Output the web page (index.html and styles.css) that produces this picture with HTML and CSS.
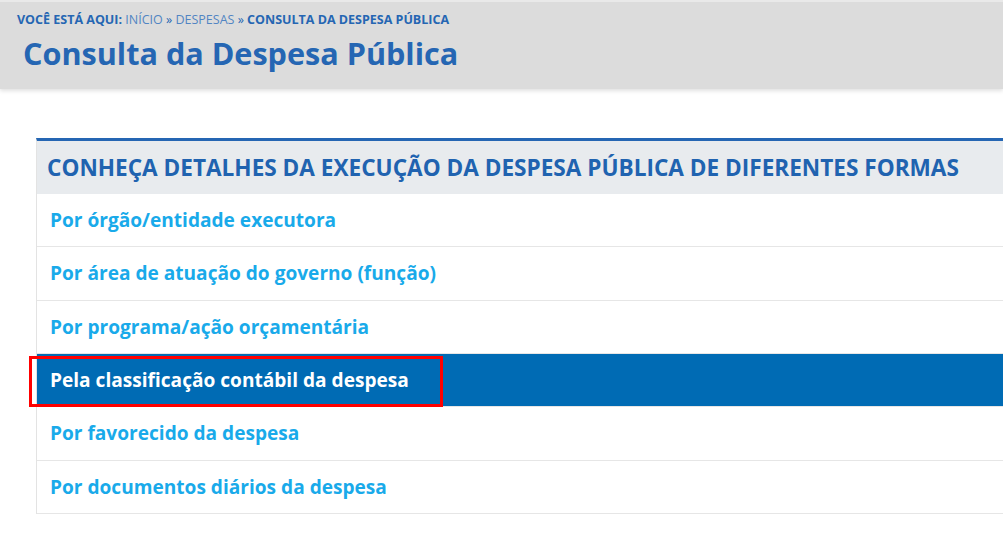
FILE: index.html
```html
<!DOCTYPE html>
<html lang="pt-BR">
<head>
<meta charset="utf-8">
<title>Consulta da Despesa Pública</title>
<link rel="stylesheet" href="styles.css">
</head>
<body>
<header class="topo">
  <div class="breadcrumb"><b>VOCÊ ESTÁ AQUI:</b> <span class="bc-link">INÍCIO</span> » <span class="bc-link">DESPESAS</span> » <b>CONSULTA DA DESPESA PÚBLICA</b></div>
  <h1 class="titulo">Consulta da Despesa Pública</h1>
</header>
<main class="conteudo">
  <section class="painel">
    <h2 class="painel-titulo">CONHEÇA DETALHES DA EXECUÇÃO DA DESPESA PÚBLICA DE DIFERENTES FORMAS</h2>
    <ul class="lista">
      <li class="item"><a href="#">Por órgão/entidade executora</a></li>
      <li class="item"><a href="#">Por área de atuação do governo (função)</a></li>
      <li class="item"><a href="#">Por programa/ação orçamentária</a></li>
      <li class="item ativo"><a href="#">Pela classificação contábil da despesa</a><span class="destaque"></span></li>
      <li class="item"><a href="#">Por favorecido da despesa</a></li>
      <li class="item"><a href="#">Por documentos diários da despesa</a></li>
    </ul>
  </section>
</main>
</body>
</html>
```
FILE: styles.css
```css
* { box-sizing: border-box; }
html, body { margin: 0; padding: 0; background: #fff; }
body { font-family: "Open Sans", "DejaVu Sans", sans-serif; overflow: hidden; }

.topo {
  background: #dcdcdc;
  border-top: 2px solid #e9e9e9;
  height: 89px;
  padding: 9px 0 0 17px;
  box-shadow: 0 2px 4px rgba(0,0,0,0.12);
  position: relative;
  z-index: 1;
}
.breadcrumb {
  font-size: 12.5px;
  line-height: 17px;
  color: #2566b3;
}
.breadcrumb b { font-weight: 700; }
.bc-link { color: #5185c3; }
.titulo {
  margin: 5px 0 0 6px;
  font-size: 30.6px;
  line-height: 40px;
  font-weight: 700;
  color: #2566b3;
}

.conteudo { padding: 49px 0 0 36px; }
.painel {
  border-top: 3px solid #2566b3;
  border-left: 1px solid #e3e3e3;
}
.painel-titulo {
  margin: 0;
  background: #e8ebee;
  height: 53px;
  padding: 0 0 0 10px;
  font-size: 22.6px;
  line-height: 53px;
  font-weight: 700;
  color: #2063b0;
  white-space: nowrap;
}
.lista { list-style: none; margin: 0; padding: 0; }
.item {
  position: relative;
  height: 53.33px;
  border-bottom: 1px solid #e6e6e6;
  display: flex;
  align-items: center;
  padding-left: 13px;
}
.item a {
  font-size: 19.1px;
  font-weight: 700;
  color: #19aaea;
  text-decoration: none;
}
.item.ativo { background: #006bb4; }
.item.ativo a { color: #fff; }
.destaque {
  position: absolute;
  left: -8px;
  top: 2px;
  width: 414px;
  height: 51px;
  border: 3px solid #f00;
}
```
